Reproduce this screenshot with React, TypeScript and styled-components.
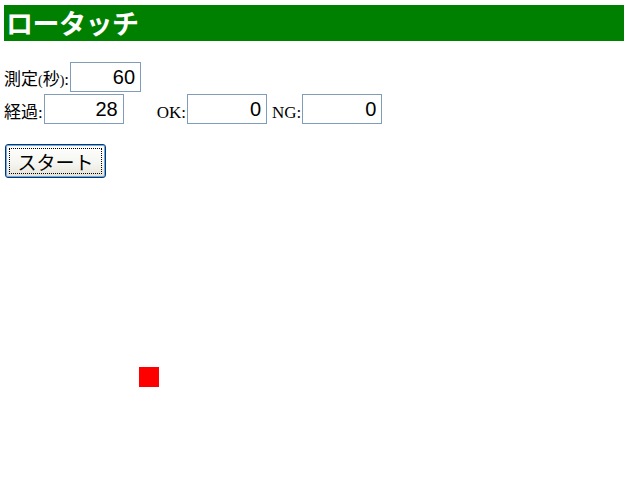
import styled, { createGlobalStyle } from 'styled-components';

const GlobalStyle = createGlobalStyle`
  html, body {
    margin: 0;
    padding: 0;
    background: #ffffff;
  }
  body {
    font-family: 'Liberation Serif', 'Noto Sans CJK JP', serif;
  }
`;

const Page = styled.div`
  position: relative;
  padding: 5px 5px 0 4px;
  height: 498px;
`;

const Header = styled.h1`
  margin: 0;
  height: 36px;
  background-color: #008000;
  color: #ffffff;
  font-family: 'Noto Sans CJK JP', sans-serif;
  font-size: 27px;
  font-weight: 700;
  line-height: 36px;
  padding-left: 2px;
  letter-spacing: -0.5px;
`;

const Form = styled.div`
  display: flex;
  flex-direction: column;
  gap: 2px;
  margin-top: 21px;
`;

const Row = styled.div`
  display: flex;
  align-items: flex-end;
`;

const Label = styled.span<{ $gap?: number }>`
  font-size: 17px;
  line-height: 17px;
  margin-left: ${(p) => p.$gap ?? 0}px;
  margin-bottom: 3px;
  color: #000;
  white-space: nowrap;
`;

const Paren = styled.span`
  font-size: 14px;
`;

const NumBox = styled.input<{ $w: number }>`
  box-sizing: border-box;
  width: ${(p) => p.$w}px;
  height: 30px;
  margin-left: 1px;
  border: 1px solid #7f9db9;
  padding: 0 5px 0 2px;
  font-family: 'Liberation Sans', Arial, sans-serif;
  font-size: 20px;
  text-align: right;
  color: #000;
  background: #fff;
  outline: none;
`;

const StartButton = styled.button`
  box-sizing: border-box;
  margin: 20px 0 0 1px;
  width: 101px;
  height: 34px;
  border: 1px solid #003c74;
  border-radius: 3px;
  background: linear-gradient(#ffffff, #f4f4f0 60%, #e6e3d6);
  box-shadow: inset 0 0 0 1px #7ba7e1;
  font-family: 'Noto Sans CJK JP', sans-serif;
  font-size: 19px;
  color: #000;
  padding: 0;
  position: relative;
  &::after {
    content: '';
    position: absolute;
    inset: 3px;
    border: 1px dotted #000;
  }
`;

const Target = styled.div`
  position: absolute;
  left: 139px;
  top: 367px;
  width: 20px;
  height: 20px;
  background: #ff0000;
`;

export default function App() {
  return (
    <>
      <GlobalStyle />
      <Page>
        <Header>ロータッチ</Header>
        <Form>
          <Row>
            <Label>
              測定<Paren>(</Paren>秒<Paren>)</Paren>:
            </Label>
            <NumBox $w={71} defaultValue="60" readOnly />
          </Row>
          <Row>
            <Label>経過:</Label>
            <NumBox $w={80} defaultValue="28" readOnly />
            <Label $gap={33}>OK:</Label>
            <NumBox $w={80} defaultValue="0" readOnly />
            <Label $gap={5}>NG:</Label>
            <NumBox $w={80} defaultValue="0" readOnly />
          </Row>
        </Form>
        <StartButton>スタート</StartButton>
        <Target />
      </Page>
    </>
  );
}
